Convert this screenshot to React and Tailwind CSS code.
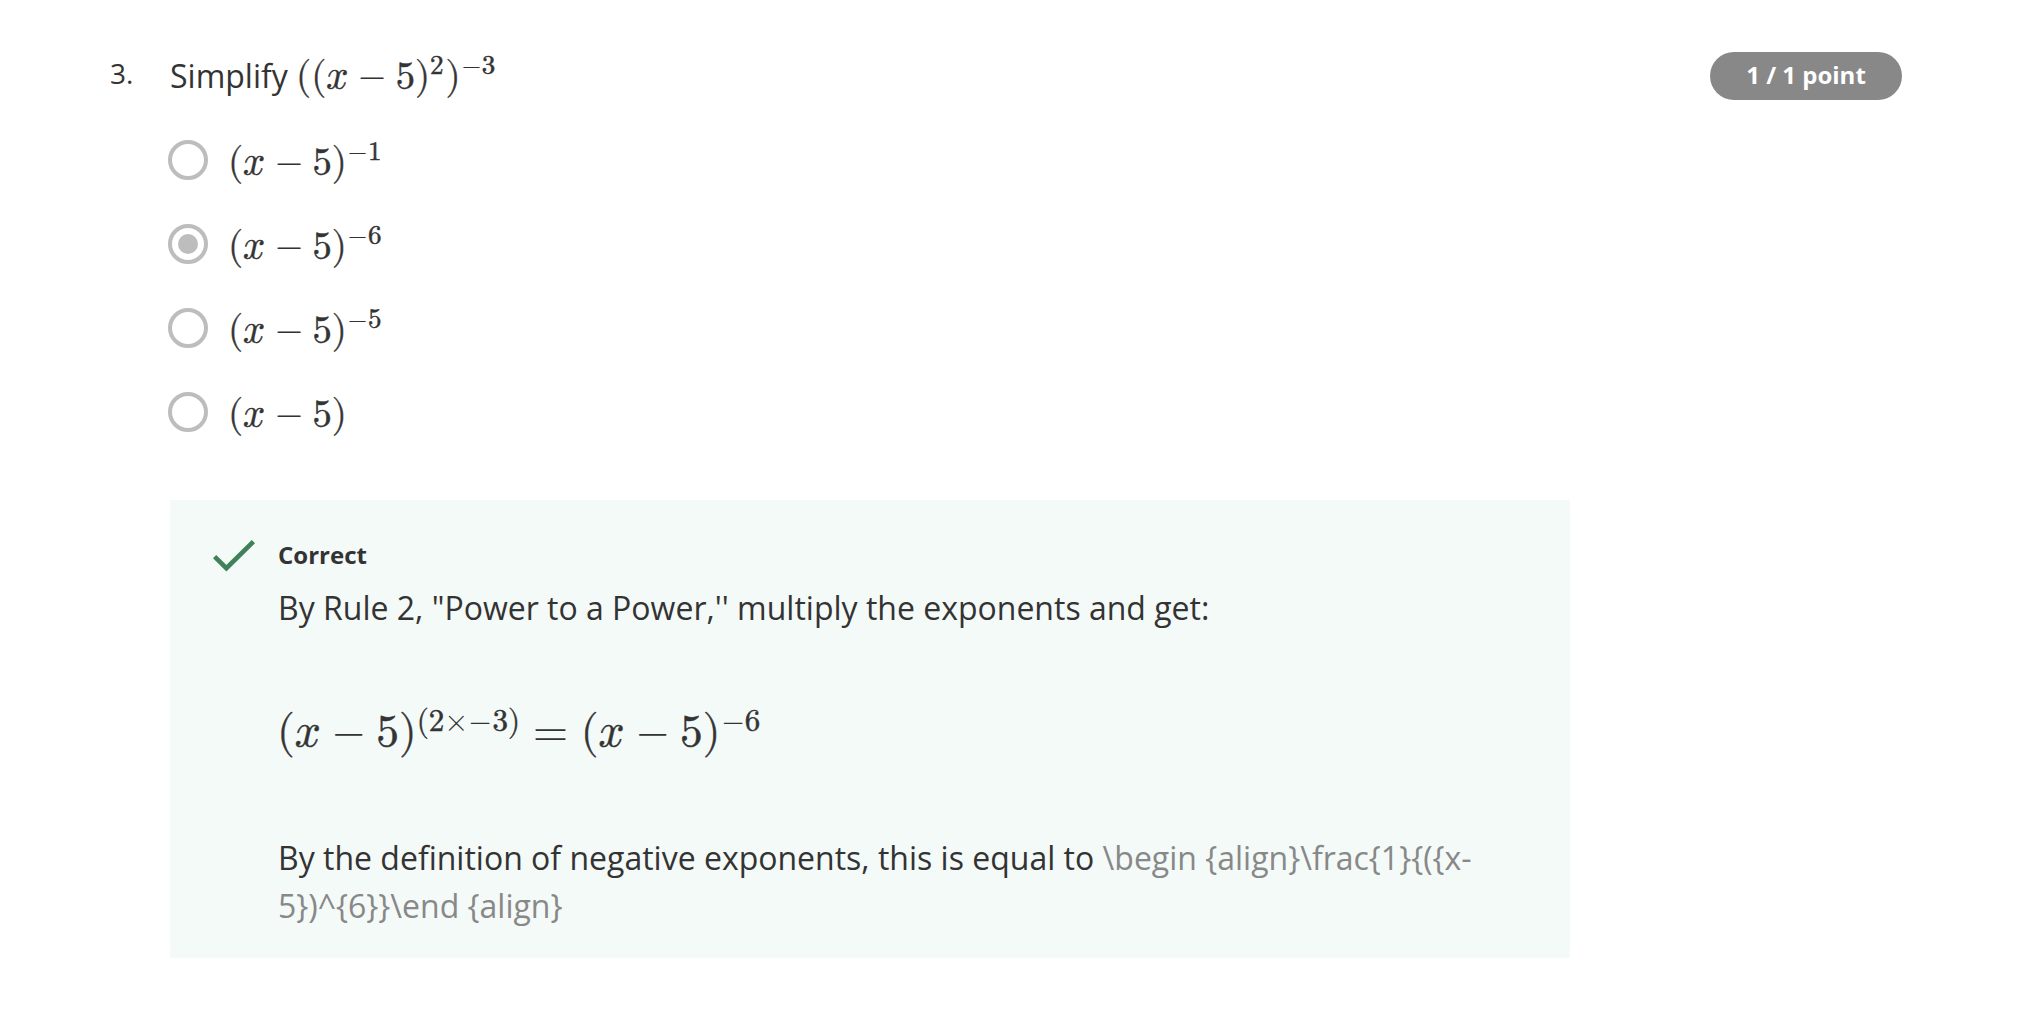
import React from 'react';

// Advance width of every symbol used in the formulas.
const WIDTHS = {
  '(': 'w-[0.389em]',
  ')': 'w-[0.389em]',
  𝑥: 'w-[0.572em]',
  '−': 'w-[0.778em] scale-x-[0.9] [-webkit-text-stroke-width:0px]',
  '×': 'w-[0.778em] [-webkit-text-stroke-width:0px]',
  '=': 'w-[0.778em] [-webkit-text-stroke-width:0px]',
  ' ': 'w-[0.222em]',
  '~': 'w-[0.278em]',
};

function Run({ text }) {
  return [...text].map((c, i) => (
    <span key={i} className={`inline-flex items-baseline justify-center ${WIDTHS[c] || 'w-[0.5em]'}`}>
      {c === ' ' || c === '~' ? null : c}
    </span>
  ));
}

function Sup({ text, className = 'top-[-0.52em] text-[0.7em]' }) {
  return (
    <span className={`relative inline-flex items-baseline ${className}`}>
      <Run text={text} />
    </span>
  );
}

function Formula({ children, className = 'text-[38.72px]' }) {
  return (
    <span
      className={`inline-flex items-baseline font-['Latin_Modern_Math','Liberation_Serif',serif] leading-[0] [-webkit-text-stroke:0.5px_#333] ${className}`}
    >
      {children}
    </span>
  );
}

function Option({ power, selected }) {
  return (
    <div className="flex h-[84px] items-start">
      <span className="mt-[2px] -ml-[2px] flex size-[40px] items-center justify-center rounded-full border-4 border-[#bdbdbd]">
        {selected && <span className="size-[20px] rounded-full bg-[#bdbdbd]" />}
      </span>
      <span className="ml-[20px] whitespace-nowrap">
        <Formula>
          <Run text="(𝑥 − 5)" />
          {power && <Sup text={power} />}
        </Formula>
      </span>
    </div>
  );
}

export default function App() {
  return (
    <main className="flex h-[1020px] w-[2028px] items-start bg-white pt-[52px] pl-[110px] font-['Open_Sans',sans-serif] text-[32px] leading-[48px] text-[#333]">
      <div className="w-[60px] text-[28px] leading-[42px]">3.</div>
      <section className="w-[1400px]">
        <h2 className="h-[86px] whitespace-nowrap">
          Simplify{' '}
          <Formula>
            <Run text="((𝑥 − 5)" />
            <Sup text="2" />
            <span className="w-[0.05em]" />
            <Run text=")" />
            <Sup text="−3" />
          </Formula>
        </h2>
        <Option power="−1" />
        <Option power="−6" selected />
        <Option power="−5" />
        <Option />
        <div className="mt-[26px] flex h-[458px] items-start bg-[#f4faf8] pt-[37px] pl-[43px]">
          <svg className="mt-[3px] h-[32px] w-[42px] shrink-0" viewBox="0 0 42 32" fill="none" stroke="#3f8159" strokeWidth="4.6">
            <path d="M1.6 16.6L13.4 28.2L40.4 1.6" />
          </svg>
          <div className="ml-[23px] w-[1226px]">
            <div className="text-[24px] leading-[36px] font-bold">Correct</div>
            <p className="mt-[11px] h-[48px] whitespace-nowrap">
              By Rule 2, "Power to a Power,'' multiply the exponents and get:
            </p>
            <p className="mt-[78px] -ml-px h-[48px] whitespace-nowrap">
              <Formula className="text-[45.5px]">
                <Run text="(𝑥 − 5)" />
                <Sup text="(2×−3)" className="top-[-0.5em] text-[0.682em]" />
                <Run text="~=~(𝑥 − 5)" />
                <Sup text="−6" className="top-[-0.5em] text-[0.682em]" />
              </Formula>
            </p>
            <p className="mt-[76px]">
              By the definition of negative exponents, this is equal to{' '}
              <span className="text-[#888]">
                {'\\begin {align}\\frac{1}{({x-'}
                <br />
                {'5})^{6}}\\end {align}'}
              </span>
            </p>
          </div>
        </div>
      </section>
      <div className="ml-[140px] h-[48px] w-[192px] rounded-full bg-[#888] text-center text-[24px] leading-[46px] font-bold text-white">
        1 / 1 point
      </div>
    </main>
  );
}
